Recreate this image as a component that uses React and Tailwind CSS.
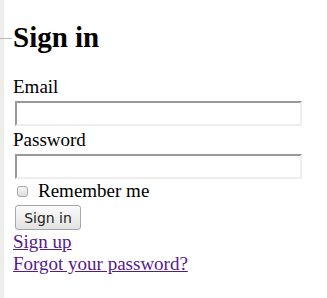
import React from "react";

export default function App() {
  return (
    <div className="relative min-h-[298px] w-full bg-white text-black font-['Liberation_Serif',serif] text-[19px] leading-[22px]">
      {/* left edge strip */}
      <div className="absolute left-0 top-0 bottom-0 w-[4px] bg-[#ededeb]" />
      <div className="absolute left-0 top-[38px] h-px w-[12px] bg-[#b8b8b8]" />

      <div className="pl-[13px] pr-[26px] pt-[20px]">
        <h1 className="font-bold text-[29px] leading-[34px] mb-[22px]">Sign in</h1>

        <form className="flex flex-col" onSubmit={(e) => e.preventDefault()}>
          <label className="block">Email</label>
          <input
            type="email"
            className="mt-[3px] ml-[2px] h-[25px] w-[287px] bg-white border-2 border-t-[#999] border-l-[#999] border-b-[#eee] border-r-[#eee] outline-none"
          />
          <label className="block mt-[3px]">Password</label>
          <input
            type="password"
            className="mt-[3px] ml-[2px] h-[25px] w-[287px] bg-white border-2 border-t-[#999] border-l-[#999] border-b-[#eee] border-r-[#eee] outline-none"
          />
          <div className="flex items-center mt-[1px] h-[22px]">
            <span className="ml-[4px] mr-[10px] h-[11px] w-[11px] rounded-[3px] border border-[#a8a8a8] bg-gradient-to-b from-[#fafafa] to-[#dcdcdc]" />
            <label>Remember me</label>
          </div>
          <div className="mt-[3px]">
            <button
              type="submit"
              className="ml-[2px] h-[25px] w-[66px] rounded-[3px] border border-[#a6a6a6] bg-gradient-to-b from-[#fbfbfb] to-[#e2e2e2] font-['DejaVu_Sans',sans-serif] text-[14px] leading-none text-[#222]"
            >
              Sign in
            </button>
          </div>
          <a href="#" className="mt-[1px] text-[#551a8b] underline">Sign up</a>
          <a href="#" className="text-[#551a8b] underline">Forgot your password?</a>
        </form>
      </div>
    </div>
  );
}
